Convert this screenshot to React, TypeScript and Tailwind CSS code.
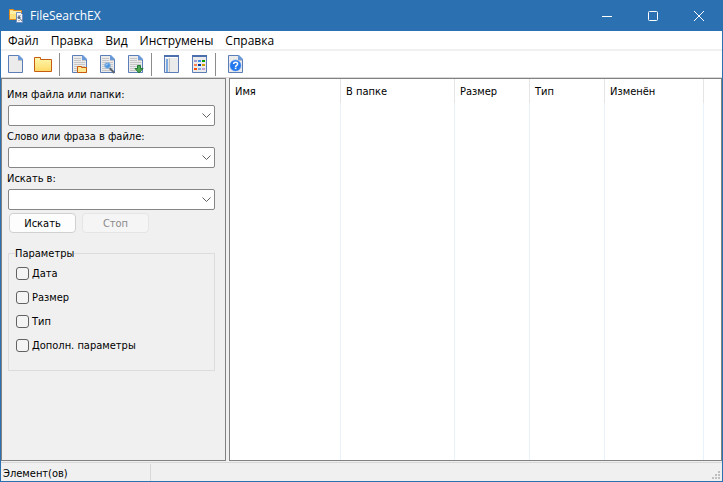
import { ReactNode, useState } from "react"

const menuItems = ["Файл", "Правка", "Вид", "Инструмены", "Справка"]

const columns = [
  { title: "Имя", width: "w-[111px]" },
  { title: "В папке", width: "w-[114px]" },
  { title: "Размер", width: "w-[75px]" },
  { title: "Тип", width: "w-[75px]" },
  { title: "Изменён", width: "w-[99px]" },
]

const filters = ["Дата", "Размер", "Тип", "Дополн. параметры"]

function AppIcon() {
  return (
    <svg width="16" height="16" viewBox="0 0 16 16" className="shrink-0">
      <path d="M1.500 1.500h4v1h8v9h-12z" fill="#ffe07a" stroke="#e08a1e" />
      <path d="M2 3h11v3H2z" fill="#fff0a8" />
      <path d="M8.500 4.500h4l2 2v8h-6z" fill="#f1f3f6" stroke="#6d8fc0" />
      <path d="M10 7.500h3M10 12.500h2" stroke="#b0b5bd" />
      <circle cx="11" cy="9.500" r="1.500" fill="#5d6c80" />
      <path d="M12 10.500l2 2.500" stroke="#5d6c80" />
    </svg>
  )
}

function Sheet({ lines = false, children }: { lines?: boolean; children?: ReactNode }) {
  return (
    <svg width="20" height="20" viewBox="0 0 20 20">
      <path d="M2.500 1.500h10l4 4v13h-14z" fill="#ebebeb" stroke="#5b7db8" />
      <path d="M12 1h1l4 4v1h-5z" fill="#6c9ad8" />
      <path d="M12 6h4v1h-4z" fill="#c4c4c4" />
      {lines && (
        <path
          d="M4 4.500h7M4 6.500h7M4 8.500h11M4 10.500h11M4 12.500h11M4 14.500h11M4 16.500h11"
          stroke="#c6c6c6"
        />
      )}
      {children}
    </svg>
  )
}

function FolderIcon() {
  return (
    <svg width="20" height="20" viewBox="0 0 20 20">
      <defs>
        <linearGradient id="folder" x1="0" y1="0" x2="0" y2="1">
          <stop offset="0" stopColor="#fff8b0" />
          <stop offset="1" stopColor="#ffd966" />
        </linearGradient>
      </defs>
      <path d="M0.500 3.500h6v2h11v12h-17z" fill="url(#folder)" stroke="#c65c10" />
    </svg>
  )
}

function SheetFolderIcon() {
  return (
    <Sheet lines>
      <path d="M7.500 12.500h4v1h5v5h-9z" fill="#ffe690" stroke="#cc5a0c" />
    </Sheet>
  )
}

function SheetSearchIcon() {
  return (
    <Sheet lines>
      <path d="M11.500 14l5 5" stroke="#5a6470" strokeWidth="2" />
      <circle cx="9.500" cy="11.500" r="3" fill="#4f98e2" stroke="#a4bfd8" />
      <path d="M8 11.500c0-1 1-1.500 2-1.500" stroke="#c6e2fb" fill="none" />
    </Sheet>
  )
}

function SheetDownIcon() {
  return (
    <Sheet lines>
      <path d="M11.500 11.500h3v3h2.500l-4 4.500-4-4.500h2.500z" fill="#4fa64f" stroke="#1f7a35" />
    </Sheet>
  )
}

function PanelIcon() {
  return (
    <svg width="20" height="20" viewBox="0 0 20 20">
      <path d="M2.500 1.500h14v17h-14z" fill="#ebebeb" stroke="#5b7db8" />
      <path d="M2 1h15v2H2z" fill="#4c70ad" />
      <path d="M3 3h13v1H3z" fill="#ffffff" />
      <path d="M4 5h2v13H4z" fill="#7baae0" />
      <path d="M7 4h1v14H7z" fill="#c2c2c2" />
    </svg>
  )
}

const swatches = [
  ["#9c9cd0", "#3f8ce8", "#009c00"],
  ["#ff8050", "#003c9c", "#d09c00"],
  ["#ff4c00", "#80a8e0", "#c49cd8"],
]

function GridIcon() {
  return (
    <svg width="20" height="20" viewBox="0 0 20 20">
      <path d="M2.500 1.500h14v17h-14z" fill="#ebebeb" stroke="#5b7db8" />
      <path d="M2 1h15v2H2z" fill="#4c70ad" />
      {swatches.map((row, y) =>
        row.map((color, x) => (
          <rect key={color} x={4 + x * 4} y={6 + y * 4} width="3" height="2" fill={color} />
        ))
      )}
    </svg>
  )
}

function HelpIcon() {
  return (
    <Sheet>
      <circle cx="9.500" cy="11.500" r="5.500" fill="#2478ee" stroke="#5a9cf5" strokeWidth="0.500" />
      <path
        d="M7.600 10.100c0-2.600 4-2.500 4-.2 0 1.500-2 1.500-2 3"
        fill="none"
        stroke="#ffffff"
        strokeWidth="1.500"
      />
      <path d="M8.800 13.600h1.600v1.500H8.800z" fill="#ffffff" />
    </Sheet>
  )
}

const toolGroups = [
  [
    { name: "Новый поиск", icon: <Sheet /> },
    { name: "Открыть", icon: <FolderIcon /> },
  ],
  [
    { name: "Открыть папку файла", icon: <SheetFolderIcon /> },
    { name: "Найти в файле", icon: <SheetSearchIcon /> },
    { name: "Сохранить", icon: <SheetDownIcon /> },
  ],
  [
    { name: "Панель", icon: <PanelIcon /> },
    { name: "Вид", icon: <GridIcon /> },
  ],
  [{ name: "Справка", icon: <HelpIcon /> }],
]

function TitleBar() {
  return (
    <header className="flex h-[31px] shrink-0 items-center bg-[#2b70b1] pl-2 pr-px text-white">
      <AppIcon />
      <h1 className="ml-1.5 flex-1 font-['Open_Sans',sans-serif] text-xs">FileSearchEX</h1>
      <button aria-label="Свернуть" className="flex h-full w-[46px] items-center justify-center">
        <svg width="10" height="10" viewBox="0 0 10 10" stroke="currentColor">
          <path d="M0 5.500h10" />
        </svg>
      </button>
      <button aria-label="Развернуть" className="flex h-full w-[46px] items-center justify-center">
        <svg width="10" height="10" viewBox="0 0 10 10" stroke="currentColor" fill="none">
          <rect x="0.500" y="0.500" width="9" height="9" rx="1" />
        </svg>
      </button>
      <button aria-label="Закрыть" className="flex h-full w-[46px] items-center justify-center">
        <svg width="10" height="10" viewBox="0 0 10 10" stroke="currentColor">
          <path d="M0 0l10 10M10 0L0 10" />
        </svg>
      </button>
    </header>
  )
}

function SearchField({ id, label }: { id: string; label: string }) {
  return (
    <div>
      <label htmlFor={id} className="-ml-px block h-5 leading-5">
        {label}
      </label>
      <div className="relative">
        <select
          id={id}
          className="block h-[21px] w-full appearance-none rounded-xs border border-[#868686] bg-white pl-1 pr-5 outline-none"
        />
        <svg
          width="9"
          height="6"
          viewBox="0 0 9 6"
          className="pointer-events-none absolute right-1 top-2"
          fill="none"
          stroke="#606060"
        >
          <path d="M0.500 0.500l4 4 4-4" />
        </svg>
      </div>
    </div>
  )
}

function SearchPanel() {
  const [checked, setChecked] = useState<string[]>([])

  const toggle = (name: string) =>
    setChecked(prev => (prev.includes(name) ? prev.filter(n => n !== name) : [...prev, name]))

  return (
    <form
      className="w-[225px] shrink-0 border border-[#828282] px-1.5 pt-1.5"
      onSubmit={e => e.preventDefault()}
    >
      <div className="mr-1 flex flex-col gap-px">
        <SearchField id="name" label="Имя файла или папки:" />
        <SearchField id="phrase" label="Слово или фраза в файле:" />
        <SearchField id="folder" label="Искать в:" />
      </div>

      <div className="mt-[3px] flex gap-1.5 pl-px">
        <button className="h-5 w-[67px] rounded border border-[#d0d0d0] bg-[#fdfdfd] pt-0.5 leading-4">
          Искать
        </button>
        <button
          disabled
          className="h-5 w-[67px] rounded border border-[#e5e5e5] bg-[#f5f5f5] pt-0.5 leading-4 text-[#8a8a8a]"
        >
          Стоп
        </button>
      </div>

      <fieldset className="mr-1 mt-3 h-[126px] border border-[#dcdcdc] px-[7px]">
        <legend className="-ml-px h-4 leading-[18px]">Параметры</legend>
        <div className="flex flex-col">
          {filters.map(name => (
            <label key={name} className="flex h-6 items-center gap-[3px]">
              <input
                type="checkbox"
                checked={checked.includes(name)}
                onChange={() => toggle(name)}
                className="size-[13px] appearance-none rounded-[3px] border border-[#626262] bg-[#f4f4f4] checked:bg-[#2b70b1]"
              />
              <span className="pt-0.5">{name}</span>
            </label>
          ))}
        </div>
      </fieldset>
    </form>
  )
}

function ResultsTable() {
  return (
    <div className="flex flex-1 border border-[#828282] bg-white">
      <table className="w-full table-fixed border-separate border-spacing-0">
        <thead>
          <tr className="h-6">
            {columns.map(col => (
              <th
                key={col.title}
                className={`${col.width} border-r border-[#e5e5e5] pl-[5px] pt-0.5 text-left font-normal`}
              >
                {col.title}
              </th>
            ))}
            <td />
          </tr>
        </thead>
        <tbody>
          <tr>
            {columns.map(col => (
              <td key={col.title} className="border-r border-[#e8f1fc]" />
            ))}
            <td />
          </tr>
        </tbody>
      </table>
    </div>
  )
}

export default function App() {
  return (
    <div className="flex min-h-screen cursor-default flex-col border-x border-b border-[#2b70b1] bg-[#f0f0f0] font-['DejaVu_Sans_Condensed','Open_Sans',sans-serif] text-[11px] text-black">
      <div className="-mx-px">
        <TitleBar />
      </div>

      <nav className="flex h-5 shrink-0 gap-3 border-b-2 border-[#f0f0f0] bg-white pl-[7px] font-['Open_Sans',sans-serif] text-xs">
        {menuItems.map(item => (
          <button key={item} className="leading-5">
            {item}
          </button>
        ))}
      </nav>

      <div className="flex h-[27px] shrink-0 items-center border-b border-[#d8d8d8] bg-white pl-px">
        {toolGroups.map((group, i) => (
          <div key={i} className="flex items-center">
            {i > 0 && <span className="ml-px mr-1.5 h-[23px] w-px bg-[#8c8c8c]" />}
            {group.map(tool => (
              <button key={tool.name} aria-label={tool.name} className="flex w-7 justify-center">
                {tool.icon}
              </button>
            ))}
          </div>
        ))}
      </div>

      <main className="flex flex-1 gap-[3px]">
        <SearchPanel />
        <ResultsTable />
      </main>

      <footer className="mt-px flex h-[19px] shrink-0 border-t border-[#d8d8d8] pt-px">
        <span className="w-[150px] border-r border-[#d8d8d8] pl-0.5 leading-5">Элемент(ов)</span>
        <svg width="8" height="8" viewBox="0 0 8 8" className="mb-0.5 ml-auto mr-0.5 self-end" fill="#bfbfbf">
          <path d="M6 0h2v2H6zM3 3h2v2H3zM6 3h2v2H6zM0 6h2v2H0zM3 6h2v2H3zM6 6h2v2H6z" />
        </svg>
      </footer>
    </div>
  )
}
